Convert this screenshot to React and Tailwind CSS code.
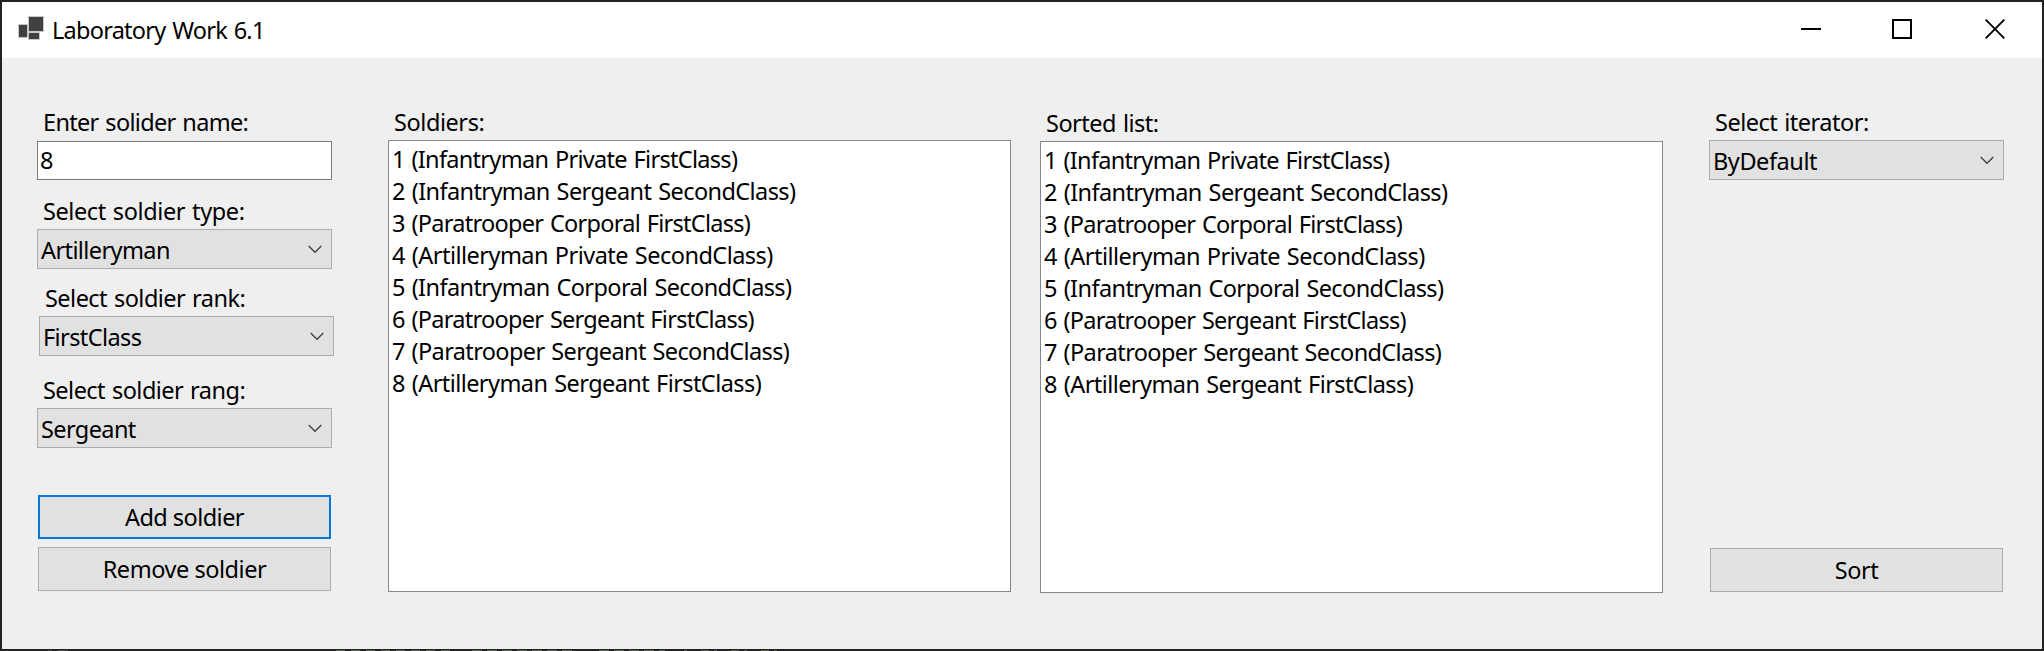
const soldiers = [
  ['1 (Infantryman Private FirstClass)', 'tracking-[-0.7px]'],
  ['2 (Infantryman Sergeant SecondClass)', 'tracking-[-0.59px]'],
  ['3 (Paratrooper Corporal FirstClass)', 'tracking-[-0.72px]'],
  ['4 (Artilleryman Private SecondClass)', 'tracking-[-0.53px]'],
  ['5 (Infantryman Corporal SecondClass)', 'tracking-[-0.6px]'],
  ['6 (Paratrooper Sergeant FirstClass)', 'tracking-[-0.72px]'],
  ['7 (Paratrooper Sergeant SecondClass)', 'tracking-[-0.63px]'],
  ['8 (Artilleryman Sergeant FirstClass)', 'tracking-[-0.57px]'],
];

function Label({ children, className = '' }) {
  return <div className={`h-8 pl-1.5 leading-8 whitespace-nowrap ${className}`}>{children}</div>;
}

function ComboBox({ value, className = '' }) {
  return (
    <div className={`flex h-10 w-[295px] items-start justify-between border border-[#adadad] bg-[#e1e1e1] pt-1 pr-[9px] pl-[3px] ${className}`}>
      <span className="leading-8">{value}</span>
      <svg width="14" height="9" viewBox="0 0 14 9" className="mt-[11px] shrink-0" fill="none" stroke="#404040" strokeWidth="1.3">
        <path d="M0.7 1 L7 7.3 L13.3 1" />
      </svg>
    </div>
  );
}

function Button({ children, focused, className = '' }) {
  return (
    <button
      className={`flex h-11 w-[293px] items-center justify-center bg-[#e1e1e1] pb-px leading-8 ${
        focused ? 'border-2 border-[#0078d7]' : 'border border-[#adadad]'
      } ${className}`}
    >
      <span>{children}</span>
    </button>
  );
}

function ListBox() {
  return (
    <ul className="h-[452px] w-[623px] border border-[#828790] bg-white pt-0.5 pl-[3px]">
      {soldiers.map(([text, tracking]) => (
        <li key={text} className={`h-8 leading-8 whitespace-nowrap ${tracking}`}>
          <span>{text}</span>
        </li>
      ))}
    </ul>
  );
}

function TitleBar() {
  return (
    <header className="flex h-14 shrink-0 items-start bg-white">
      <svg width="28" height="26" viewBox="0 0 28 26" className="mt-[13px] ml-[15px] shrink-0">
        <g fill="#404040" stroke="#c8c8c8" strokeWidth="1">
          <rect x="1.5" y="9.5" width="9" height="13" />
          <rect x="11.5" y="1.5" width="15" height="15" />
          <rect x="11.5" y="17.5" width="11" height="7" />
        </g>
      </svg>
      <h1 className="mt-3 ml-[7px] leading-8 whitespace-nowrap tracking-[-0.75px]">Laboratory Work 6.1</h1>
      <svg width="204" height="20" viewBox="0 0 204 20" className="mt-[17px] mr-[37px] ml-auto shrink-0" fill="none" stroke="#000" strokeWidth="2">
        <path d="M0 10 H20" />
        <rect x="92" y="1" width="18" height="18" />
        <path d="M184.7 0.7 L203.3 19.3 M203.3 0.7 L184.7 19.3" strokeWidth="1.9" />
      </svg>
    </header>
  );
}

/* Sliver of the editor window showing below the form. */
function EditorEdge() {
  return (
    <svg width="2040" height="2" viewBox="0 0 2040 2" className="block shrink-0 bg-[#222]" fill="none" strokeWidth="1">
      <path d="M334 1.5 H450" stroke="#5c625c" strokeDasharray="9 6" />
      <path d="M470 1.5 H574" stroke="#5c625c" strokeDasharray="10 5" />
      <path d="M597 1.5 H663" stroke="#5c625c" strokeDasharray="10 5" />
      <path d="M682 1.5 H786" stroke="#5a6048" strokeDasharray="3 14 8 5" />
      <path d="M46 1.5 H72" stroke="#4a4a4a" strokeDasharray="4 6 10 6" />
    </svg>
  );
}

export default function App() {
  return (
    <div className="flex h-[651px] w-[2044px] flex-col border-2 border-b-0 border-[#222] bg-[#efefef] font-['Noto_Sans','Open_Sans',sans-serif] text-[23.5px] text-black [word-spacing:1.3px]">
      <TitleBar />
      <main className="flex min-h-0 flex-1 items-start pl-[35px]">
        <section className="flex w-[351px] flex-col items-start pt-12">
          <Label className="tracking-[-0.68px]">Enter solider name:</Label>
          <div className="mt-[3px] h-[39px] w-[295px] border border-[#7a7a7a] bg-white pt-0.5 pl-0.5 leading-8">8</div>
          <Label className="mt-[15px] tracking-[-0.4px]">Select soldier type:</Label>
          <ComboBox value="Artilleryman" className="mt-[2px] tracking-[-0.6px]" />
          <Label className="mt-[13px] ml-0.5 tracking-[-0.53px]">Select soldier rank:</Label>
          <ComboBox value="FirstClass" className="mt-[2px] ml-0.5 tracking-[-0.6px]" />
          <Label className="mt-[18px] tracking-[-0.53px]">Select soldier rang:</Label>
          <ComboBox value="Sergeant" className="mt-[2px] tracking-[-0.6px]" />
          <Button focused className="mt-[47px] ml-px tracking-[-0.55px]">Add soldier</Button>
          <Button className="mt-2 ml-px tracking-[-0.45px]">Remove soldier</Button>
        </section>
        <section className="w-[652px] pt-12">
          <Label className="mb-0.5 tracking-[-0.43px]">Soldiers:</Label>
          <ListBox />
        </section>
        <section className="w-[669px] pt-[49px]">
          <Label className="mb-0.5 tracking-[-0.5px]">Sorted list:</Label>
          <ListBox />
        </section>
        <section className="flex w-[295px] flex-col items-start pt-12">
          <Label className="mb-0.5 tracking-[-0.49px]">Select iterator:</Label>
          <ComboBox value="ByDefault" className="tracking-[-0.43px]" />
          <Button className="mt-[368px] ml-px tracking-[-0.4px]">Sort</Button>
        </section>
      </main>
      <EditorEdge />
    </div>
  );
}
